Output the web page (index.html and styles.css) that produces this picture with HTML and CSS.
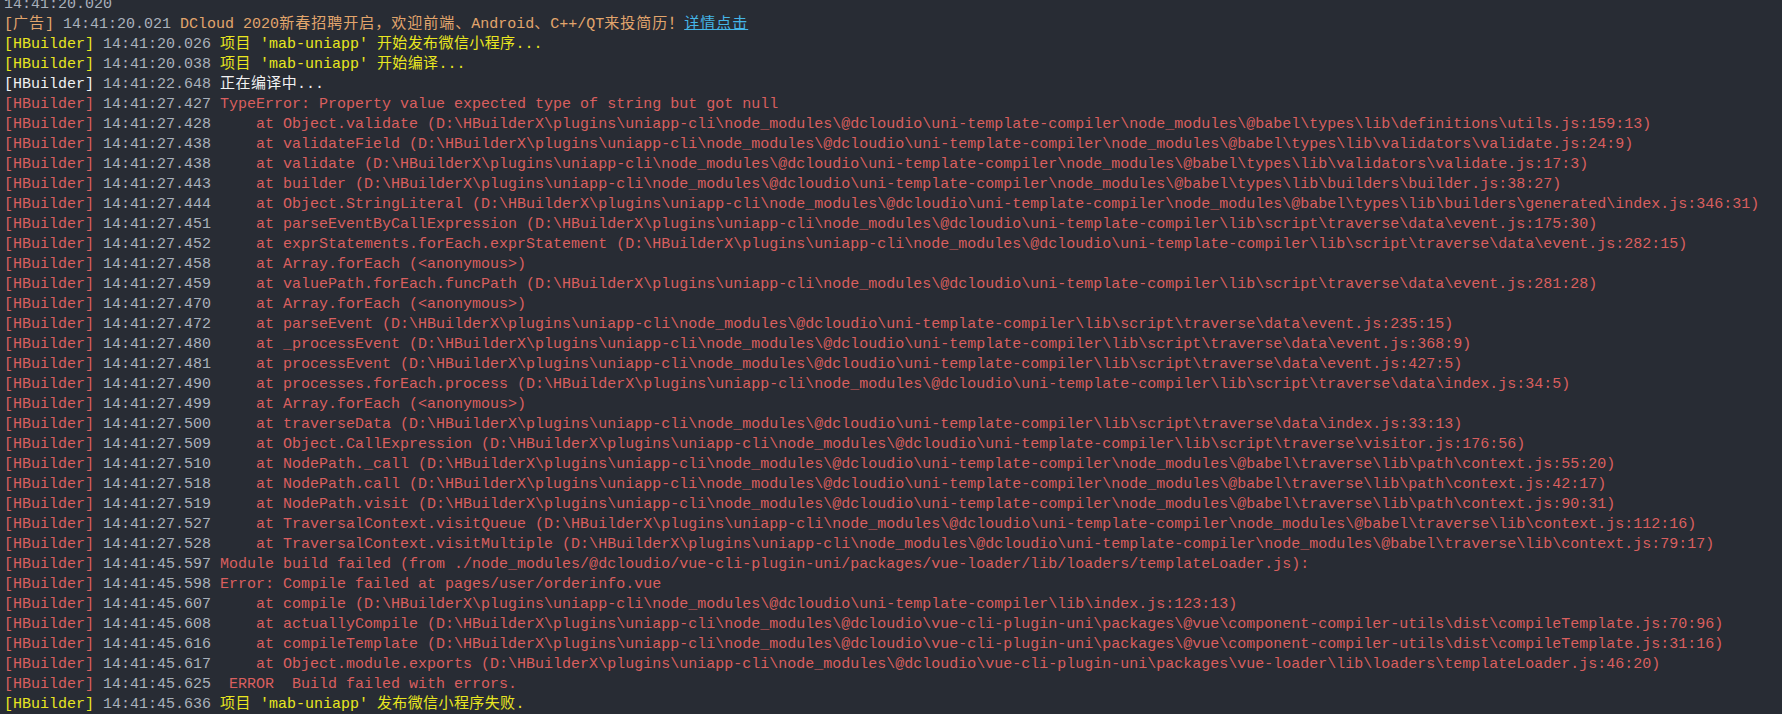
FILE: index.html
```html
<!DOCTYPE html>
<html lang="zh-CN">
<head>
  <meta charset="UTF-8" />
  <title>HBuilderX 控制台</title>
  <link rel="stylesheet" href="styles.css">
</head>
<body>
  <div class="console">
    <div class="line"><span class="time">14:41:20.020</span></div>
    <div class="line ad"><span class="tag">[<span class="cjk">广告</span>]</span> <span class="time">14:41:20.021</span> DCloud 2020<span class="cjk">新春招聘开启，欢迎前端、</span>Android<span class="cjk">、</span>C++/QT<span class="cjk">来投简历！</span><a class="link cjk" href="#">详情点击</a></div>
    <div class="line warn"><span class="tag">[HBuilder]</span> <span class="time">14:41:20.026</span> <span class="zh">项目</span> 'mab-uniapp' <span class="zh">开始发布微信小程序</span>...</div>
    <div class="line warn"><span class="tag">[HBuilder]</span> <span class="time">14:41:20.038</span> <span class="zh">项目</span> 'mab-uniapp' <span class="zh">开始编译</span>...</div>
    <div class="line info"><span class="tag">[HBuilder]</span> <span class="time">14:41:22.648</span> <span class="zh">正在编译中</span>...</div>
    <div class="line err"><span class="tag">[HBuilder]</span> <span class="time">14:41:27.427</span> TypeError: Property value expected type of string but got null</div>
    <div class="line err"><span class="tag">[HBuilder]</span> <span class="time">14:41:27.428</span>     at Object.validate (D:\HBuilderX\plugins\uniapp-cli\node_modules\@dcloudio\uni-template-compiler\node_modules\@babel\types\lib\definitions\utils.js:159:13)</div>
    <div class="line err"><span class="tag">[HBuilder]</span> <span class="time">14:41:27.438</span>     at validateField (D:\HBuilderX\plugins\uniapp-cli\node_modules\@dcloudio\uni-template-compiler\node_modules\@babel\types\lib\validators\validate.js:24:9)</div>
    <div class="line err"><span class="tag">[HBuilder]</span> <span class="time">14:41:27.438</span>     at validate (D:\HBuilderX\plugins\uniapp-cli\node_modules\@dcloudio\uni-template-compiler\node_modules\@babel\types\lib\validators\validate.js:17:3)</div>
    <div class="line err"><span class="tag">[HBuilder]</span> <span class="time">14:41:27.443</span>     at builder (D:\HBuilderX\plugins\uniapp-cli\node_modules\@dcloudio\uni-template-compiler\node_modules\@babel\types\lib\builders\builder.js:38:27)</div>
    <div class="line err"><span class="tag">[HBuilder]</span> <span class="time">14:41:27.444</span>     at Object.StringLiteral (D:\HBuilderX\plugins\uniapp-cli\node_modules\@dcloudio\uni-template-compiler\node_modules\@babel\types\lib\builders\generated\index.js:346:31)</div>
    <div class="line err"><span class="tag">[HBuilder]</span> <span class="time">14:41:27.451</span>     at parseEventByCallExpression (D:\HBuilderX\plugins\uniapp-cli\node_modules\@dcloudio\uni-template-compiler\lib\script\traverse\data\event.js:175:30)</div>
    <div class="line err"><span class="tag">[HBuilder]</span> <span class="time">14:41:27.452</span>     at exprStatements.forEach.exprStatement (D:\HBuilderX\plugins\uniapp-cli\node_modules\@dcloudio\uni-template-compiler\lib\script\traverse\data\event.js:282:15)</div>
    <div class="line err"><span class="tag">[HBuilder]</span> <span class="time">14:41:27.458</span>     at Array.forEach (&lt;anonymous&gt;)</div>
    <div class="line err"><span class="tag">[HBuilder]</span> <span class="time">14:41:27.459</span>     at valuePath.forEach.funcPath (D:\HBuilderX\plugins\uniapp-cli\node_modules\@dcloudio\uni-template-compiler\lib\script\traverse\data\event.js:281:28)</div>
    <div class="line err"><span class="tag">[HBuilder]</span> <span class="time">14:41:27.470</span>     at Array.forEach (&lt;anonymous&gt;)</div>
    <div class="line err"><span class="tag">[HBuilder]</span> <span class="time">14:41:27.472</span>     at parseEvent (D:\HBuilderX\plugins\uniapp-cli\node_modules\@dcloudio\uni-template-compiler\lib\script\traverse\data\event.js:235:15)</div>
    <div class="line err"><span class="tag">[HBuilder]</span> <span class="time">14:41:27.480</span>     at _processEvent (D:\HBuilderX\plugins\uniapp-cli\node_modules\@dcloudio\uni-template-compiler\lib\script\traverse\data\event.js:368:9)</div>
    <div class="line err"><span class="tag">[HBuilder]</span> <span class="time">14:41:27.481</span>     at processEvent (D:\HBuilderX\plugins\uniapp-cli\node_modules\@dcloudio\uni-template-compiler\lib\script\traverse\data\event.js:427:5)</div>
    <div class="line err"><span class="tag">[HBuilder]</span> <span class="time">14:41:27.490</span>     at processes.forEach.process (D:\HBuilderX\plugins\uniapp-cli\node_modules\@dcloudio\uni-template-compiler\lib\script\traverse\data\index.js:34:5)</div>
    <div class="line err"><span class="tag">[HBuilder]</span> <span class="time">14:41:27.499</span>     at Array.forEach (&lt;anonymous&gt;)</div>
    <div class="line err"><span class="tag">[HBuilder]</span> <span class="time">14:41:27.500</span>     at traverseData (D:\HBuilderX\plugins\uniapp-cli\node_modules\@dcloudio\uni-template-compiler\lib\script\traverse\data\index.js:33:13)</div>
    <div class="line err"><span class="tag">[HBuilder]</span> <span class="time">14:41:27.509</span>     at Object.CallExpression (D:\HBuilderX\plugins\uniapp-cli\node_modules\@dcloudio\uni-template-compiler\lib\script\traverse\visitor.js:176:56)</div>
    <div class="line err"><span class="tag">[HBuilder]</span> <span class="time">14:41:27.510</span>     at NodePath._call (D:\HBuilderX\plugins\uniapp-cli\node_modules\@dcloudio\uni-template-compiler\node_modules\@babel\traverse\lib\path\context.js:55:20)</div>
    <div class="line err"><span class="tag">[HBuilder]</span> <span class="time">14:41:27.518</span>     at NodePath.call (D:\HBuilderX\plugins\uniapp-cli\node_modules\@dcloudio\uni-template-compiler\node_modules\@babel\traverse\lib\path\context.js:42:17)</div>
    <div class="line err"><span class="tag">[HBuilder]</span> <span class="time">14:41:27.519</span>     at NodePath.visit (D:\HBuilderX\plugins\uniapp-cli\node_modules\@dcloudio\uni-template-compiler\node_modules\@babel\traverse\lib\path\context.js:90:31)</div>
    <div class="line err"><span class="tag">[HBuilder]</span> <span class="time">14:41:27.527</span>     at TraversalContext.visitQueue (D:\HBuilderX\plugins\uniapp-cli\node_modules\@dcloudio\uni-template-compiler\node_modules\@babel\traverse\lib\context.js:112:16)</div>
    <div class="line err"><span class="tag">[HBuilder]</span> <span class="time">14:41:27.528</span>     at TraversalContext.visitMultiple (D:\HBuilderX\plugins\uniapp-cli\node_modules\@dcloudio\uni-template-compiler\node_modules\@babel\traverse\lib\context.js:79:17)</div>
    <div class="line err"><span class="tag">[HBuilder]</span> <span class="time">14:41:45.597</span> Module build failed (from ./node_modules/@dcloudio/vue-cli-plugin-uni/packages/vue-loader/lib/loaders/templateLoader.js):</div>
    <div class="line err"><span class="tag">[HBuilder]</span> <span class="time">14:41:45.598</span> Error: Compile failed at pages/user/orderinfo.vue</div>
    <div class="line err"><span class="tag">[HBuilder]</span> <span class="time">14:41:45.607</span>     at compile (D:\HBuilderX\plugins\uniapp-cli\node_modules\@dcloudio\uni-template-compiler\lib\index.js:123:13)</div>
    <div class="line err"><span class="tag">[HBuilder]</span> <span class="time">14:41:45.608</span>     at actuallyCompile (D:\HBuilderX\plugins\uniapp-cli\node_modules\@dcloudio\vue-cli-plugin-uni\packages\@vue\component-compiler-utils\dist\compileTemplate.js:70:96)</div>
    <div class="line err"><span class="tag">[HBuilder]</span> <span class="time">14:41:45.616</span>     at compileTemplate (D:\HBuilderX\plugins\uniapp-cli\node_modules\@dcloudio\vue-cli-plugin-uni\packages\@vue\component-compiler-utils\dist\compileTemplate.js:31:16)</div>
    <div class="line err"><span class="tag">[HBuilder]</span> <span class="time">14:41:45.617</span>     at Object.module.exports (D:\HBuilderX\plugins\uniapp-cli\node_modules\@dcloudio\vue-cli-plugin-uni\packages\vue-loader\lib\loaders\templateLoader.js:46:20)</div>
    <div class="line err"><span class="tag">[HBuilder]</span> <span class="time">14:41:45.625</span>  ERROR  Build failed with errors.</div>
    <div class="line warn"><span class="tag">[HBuilder]</span> <span class="time">14:41:45.636</span> <span class="zh">项目</span> 'mab-uniapp' <span class="zh">发布微信小程序失败</span>.</div>
  </div>
</body>
</html>
```

FILE: styles.css
```css
* { box-sizing: border-box; margin: 0; padding: 0; }
html, body { height: 100%; }
body {
  background: #282c34;
  overflow: hidden;
  font-family: 'Liberation Mono', 'Noto Sans CJK SC', monospace;
  font-size: 15px;
  color: #abb2bf;
}
.console { margin-top: -5px; padding-left: 4px; }
.line { white-space: pre; line-height: 20px; height: 20px; }
.time { color: #a9b1bc; }
.cjk { letter-spacing: 1px; }
.zh { letter-spacing: 0.4px; }
.ad { color: #e2a56c; }
.ad .tag { color: #e2a56c; }
.link { color: #45b6e8; text-decoration: underline; }
.warn { color: #e8e620; }
.info { color: #f2f2f2; }
.err { color: #d95f5f; }
```
